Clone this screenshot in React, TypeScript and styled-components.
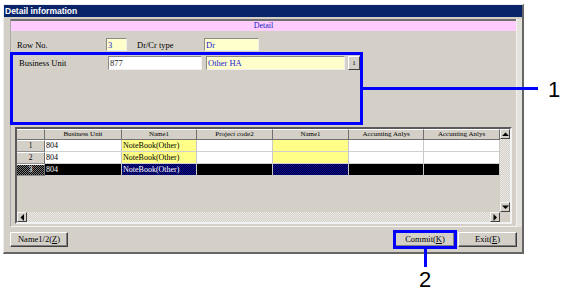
import styled, { createGlobalStyle } from "styled-components";

const GlobalStyle = createGlobalStyle`
  html, body { margin: 0; padding: 0; background: #ffffff; }
  body { font-family: "Liberation Serif", serif; }
`;

type Tone = "white" | "yellow" | "black" | "navy";

const columns = [
  { w: 77, label: "Business Unit", yellow: false },
  { w: 75, label: "Name1", yellow: true },
  { w: 76, label: "Project code2", yellow: false },
  { w: 76, label: "Name1", yellow: true },
  { w: 75, label: "Accunting Anlys", yellow: false },
  { w: 76, label: "Accunting Anlys", yellow: false },
];

const rows = [
  { no: "1", values: ["804", "NoteBook(Other)", "", "", "", ""], selected: false },
  { no: "2", values: ["804", "NoteBook(Other)", "", "", "", ""], selected: false },
  { no: "3", values: ["804", "NoteBook(Other)", "", "", "", ""], selected: true },
];

function toneFor(yellow: boolean, selected: boolean): Tone {
  if (selected) return yellow ? "navy" : "black";
  return yellow ? "yellow" : "white";
}

function Arrow({ dir }: { dir: "up" | "down" | "left" | "right" }) {
  const pts = {
    up: "0,4 3.5,0.5 7,4",
    down: "0,0.5 3.5,4 7,0.5",
    left: "4,0 0.5,3.5 4,7",
    right: "0.5,0 4,3.5 0.5,7",
  }[dir];
  const vertical = dir === "up" || dir === "down";
  return (
    <svg width={vertical ? 7 : 5} height={vertical ? 5 : 7} viewBox={vertical ? "0 0 7 5" : "0 0 5 7"}>
      <polygon points={pts} fill="#000" />
    </svg>
  );
}

function App() {
  return (
    <Stage>
      <GlobalStyle />
      <Window>
        <TitleBar>Detail information</TitleBar>
        <Main>
          <Panel>
            <DetailBar>Detail</DetailBar>
            <FieldRow>
              <Label $w={89}>Row No.</Label>
              <Input $w={21} $bg="#ffffcc" $blue>3</Input>
              <Label $w={67} $gap={10}>Dr/Cr type</Label>
              <Input $w={55} $bg="#ffffcc" $blue>Dr</Input>
            </FieldRow>
            <Callout>
              <FieldRow $h={14}>
                <Label $w={89}>Business Unit</Label>
                <Input $w={94} $bg="#ffffff">877</Input>
                <Input $w={139} $bg="#ffffcc" $blue $gap={4}>Other HA</Input>
                <TinyButton>1</TinyButton>
              </FieldRow>
              <CalloutLine />
              <CalloutNumber $left={535} $top={24}>1</CalloutNumber>
            </Callout>
            <GridFrame>
              <GridMain>
                <HeaderRow>
                  <HeadCell $w={28} />
                  {columns.map((c, i) => (
                    <HeadCell key={i} $w={c.w}>{c.label}</HeadCell>
                  ))}
                </HeaderRow>
                {rows.map((r) => (
                  <DataRow key={r.no}>
                    <RowHead $selected={r.selected}>{r.no}</RowHead>
                    {columns.map((c, i) => (
                      <Cell key={i} $w={c.w} $tone={toneFor(c.yellow, r.selected)}>
                        {r.values[i]}
                      </Cell>
                    ))}
                  </DataRow>
                ))}
                <GridEmpty />
                <HScroll>
                  <ScrollButton><Arrow dir="left" /></ScrollButton>
                  <Track />
                  <ScrollButton><Arrow dir="right" /></ScrollButton>
                </HScroll>
              </GridMain>
              <VScroll>
                <ScrollButton><Arrow dir="up" /></ScrollButton>
                <Track />
                <ScrollButton><Arrow dir="down" /></ScrollButton>
                <Corner />
              </VScroll>
            </GridFrame>
          </Panel>
          <SideStrip />
        </Main>
        <ButtonBar>
          <WinButton $w={58}>Name1/2(<u>Z</u>)</WinButton>
          <Spacer />
          <CommitWrap>
            <WinButton $w={60} $highlight>Commit(<u>K</u>)</WinButton>
            <DropLine />
            <CalloutNumber $left={24} $top={37}>2</CalloutNumber>
          </CommitWrap>
          <WinButton $w={59} $gap={3}>Exit(<u>E</u>)</WinButton>
        </ButtonBar>
      </Window>
    </Stage>
  );
}

const Stage = styled.div`
  position: relative;
  width: 570px;
  height: 298px;
  padding: 4px 0 0 3px;
  box-sizing: border-box;
`;

const Window = styled.div`
  width: 521px;
  height: 250px;
  box-sizing: border-box;
  background: #d4d0c8;
  border-top: 1px solid #ececec;
  border-left: 1px solid #ececec;
  border-right: 2px solid #666666;
  border-bottom: 2px solid #666666;
  display: flex;
  flex-direction: column;
`;

const TitleBar = styled.div`
  height: 12px;
  line-height: 12px;
  background: #0a246a;
  color: #ffffff;
  font-family: "Liberation Sans", Arial, sans-serif;
  font-weight: bold;
  font-size: 8.5px;
  padding-left: 1px;
`;

const Main = styled.div`
  display: flex;
  margin-top: 2px;
  padding-left: 6px;
`;

const Panel = styled.div`
  position: relative;
  width: 506px;
  height: 208px;
  box-sizing: border-box;
  border-top: 2px solid #707070;
  border-left: 1px solid #a8a8a8;
  border-bottom: 1px solid #f4f4f4;
  padding-bottom: 2px;
  display: flex;
  flex-direction: column;
`;

const SideStrip = styled.div`
  width: 6px;
  height: 208px;
  box-sizing: border-box;
  background: #e4e2dd;
  border-left: 1px dotted #ffffff;
`;

const DetailBar = styled.div`
  height: 10px;
  line-height: 10px;
  background: #ffccff;
  color: #2020c0;
  font-size: 8px;
  text-align: center;
`;

const FieldRow = styled.div<{ $h?: number }>`
  display: flex;
  align-items: center;
  height: ${({ $h }) => $h ?? 13}px;
  margin-top: ${({ $h }) => ($h ? 0 : 7)}px;
  padding-left: 6px;
`;

const Label = styled.div<{ $w: number; $gap?: number }>`
  width: ${({ $w }) => $w}px;
  margin-left: ${({ $gap }) => $gap ?? 0}px;
  font-size: 8.5px;
  color: #000000;
  white-space: nowrap;
`;

const Input = styled.div<{ $w: number; $bg: string; $blue?: boolean; $gap?: number }>`
  width: ${({ $w }) => $w}px;
  height: 100%;
  box-sizing: border-box;
  margin-left: ${({ $gap }) => $gap ?? 0}px;
  background: ${({ $bg }) => $bg};
  border-top: 1px solid #8a8a8a;
  border-left: 1px solid #8a8a8a;
  border-right: 1px solid #f0f0f0;
  border-bottom: 1px solid #f0f0f0;
  padding-left: 1px;
  font-size: 8.5px;
  line-height: 12px;
  color: ${({ $blue }) => ($blue ? "#1a1ad0" : "#202020")};
  white-space: nowrap;
`;

const TinyButton = styled.div`
  width: 12px;
  height: 14px;
  box-sizing: border-box;
  margin-left: 3px;
  background: #d4d0c8;
  border: 1px solid;
  border-color: #ffffff #404040 #404040 #ffffff;
  font-size: 7px;
  line-height: 12px;
  text-align: center;
`;

const Callout = styled.div`
  position: relative;
  width: 353px;
  height: 73px;
  box-sizing: border-box;
  margin: 1px 0 0 -1px;
  border: 3px solid #0000ff;
  padding: 1px 0 0 0;
`;

const CalloutLine = styled.div`
  position: absolute;
  left: 350px;
  top: 32px;
  width: 175px;
  height: 3px;
  background: #0000ff;
`;

const CalloutNumber = styled.div<{ $left: number; $top: number }>`
  position: absolute;
  left: ${({ $left }) => $left}px;
  top: ${({ $top }) => $top}px;
  font-family: "Liberation Sans", Arial, sans-serif;
  font-size: 22px;
  line-height: 22px;
  color: #000000;
`;

const GridFrame = styled.div`
  display: flex;
  width: 497px;
  height: 97px;
  box-sizing: border-box;
  margin: 2px 0 0 4px;
  border-top: 2px solid #5a5a5a;
  border-left: 2px solid #5a5a5a;
  border-right: 2px solid #f2f2f2;
  border-bottom: 2px solid #f2f2f2;
  background: #d4d0c8;
`;

const GridMain = styled.div`
  width: 483px;
  display: flex;
  flex-direction: column;
`;

const HeaderRow = styled.div`
  display: flex;
  height: 11px;
`;

const HeadCell = styled.div<{ $w: number }>`
  width: ${({ $w }) => $w}px;
  box-sizing: border-box;
  border-right: 1px solid #707070;
  border-bottom: 1px solid #707070;
  border-top: 1px solid #ffffff;
  background: #d4d0c8;
  font-size: 7px;
  line-height: 9px;
  text-align: center;
  white-space: nowrap;
  overflow: hidden;
`;

const DataRow = styled.div`
  display: flex;
  height: 12px;
`;

const RowHead = styled.div<{ $selected: boolean }>`
  width: 28px;
  box-sizing: border-box;
  border-right: 1px solid #707070;
  border-bottom: 1px solid #909090;
  border-top: 1px solid #ffffff;
  background: ${({ $selected }) =>
    $selected
      ? "repeating-conic-gradient(#000 0 25%, #7a7a7a 0 50%) 0 0 / 2px 2px"
      : "#d4d0c8"};
  color: ${({ $selected }) => ($selected ? "#ffffff" : "#000000")};
  font-size: 7.5px;
  line-height: 10px;
  text-align: center;
`;

const toneBg: Record<Tone, string> = {
  white: "#ffffff",
  yellow: "#ffff88",
  black: "#000000",
  navy: "repeating-conic-gradient(#0a0a8c 0 25%, #000044 0 50%) 0 0 / 2px 2px",
};

const Cell = styled.div<{ $w: number; $tone: Tone }>`
  width: ${({ $w }) => $w}px;
  box-sizing: border-box;
  border-right: 1px solid #c8c8c8;
  border-bottom: 1px solid #d0d0d0;
  background: ${({ $tone }) => toneBg[$tone]};
  color: ${({ $tone }) => ($tone === "black" || $tone === "navy" ? "#ffffff" : "#000000")};
  font-size: 8px;
  line-height: 11px;
  padding-left: 1px;
  white-space: nowrap;
  overflow: hidden;
`;

const GridEmpty = styled.div`
  flex: 1;
  background: #d4d0c8;
`;

const HScroll = styled.div`
  display: flex;
  height: 10px;
`;

const VScroll = styled.div`
  width: 10px;
  display: flex;
  flex-direction: column;
`;

const ScrollButton = styled.div`
  width: 10px;
  height: 10px;
  box-sizing: border-box;
  background: #d4d0c8;
  border: 1px solid;
  border-color: #f4f4f4 #404040 #404040 #f4f4f4;
  display: flex;
  align-items: center;
  justify-content: center;
`;

const Track = styled.div`
  flex: 1;
  background: repeating-conic-gradient(#eceae6 0 25%, #d4d0c8 0 50%) 0 0 / 2px 2px;
`;

const Corner = styled.div`
  height: 10px;
  background: #d4d0c8;
`;

const ButtonBar = styled.div`
  display: flex;
  align-items: flex-start;
  margin-top: 5px;
  padding: 0 5px 0 6px;
`;

const Spacer = styled.div`
  flex: 1;
`;

const CommitWrap = styled.div`
  position: relative;
`;

const WinButton = styled.div<{ $w: number; $gap?: number; $highlight?: boolean }>`
  width: ${({ $w }) => $w}px;
  height: 15px;
  box-sizing: border-box;
  margin-left: ${({ $gap }) => $gap ?? 0}px;
  background: #d4d0c8;
  border: 1px solid;
  border-color: #ffffff #404040 #404040 #ffffff;
  box-shadow: inset -1px -1px #808080;
  font-size: 8.5px;
  line-height: 13px;
  text-align: center;
  white-space: nowrap;
  outline: ${({ $highlight }) => ($highlight ? "3px solid #0000ff" : "none")};
  outline-offset: -1px;
  u { text-decoration: underline; }
`;

const DropLine = styled.div`
  position: absolute;
  left: 29px;
  top: 16px;
  width: 3px;
  height: 19px;
  background: #0000ff;
`;

export default App;
